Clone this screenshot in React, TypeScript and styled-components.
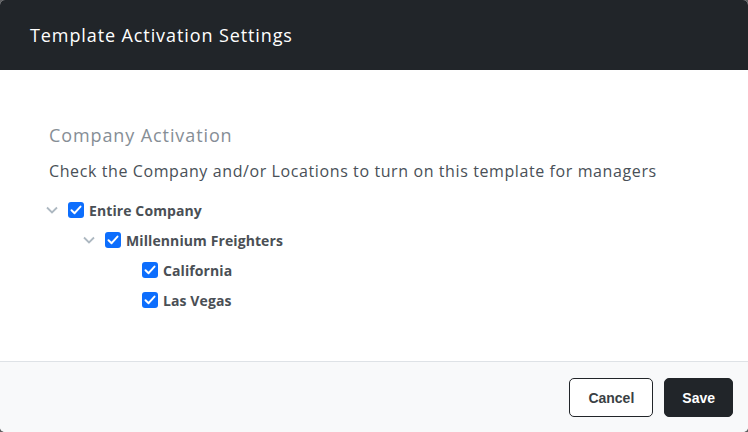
import styled, { createGlobalStyle } from "styled-components"

const GlobalStyle = createGlobalStyle`
  html, body {
    margin: 0;
    padding: 0;
    background: #5f6062;
  }
  * {
    box-sizing: border-box;
  }
`

const Modal = styled.div`
  width: 748px;
  height: 432px;
  display: flex;
  flex-direction: column;
  background: #fff;
  border-radius: 5px;
  overflow: hidden;
  font-family: "Open Sans", "Liberation Sans", sans-serif;
`

const Header = styled.div`
  height: 70px;
  display: flex;
  align-items: center;
  padding: 0 30px;
  background: #212529;
  color: #fff;
  font-size: 18px;
  font-weight: 500;
  letter-spacing: 0.9px;
`

const Body = styled.div`
  flex: 1;
  padding: 53px 49px 0;
`

const SectionTitle = styled.div`
  font-size: 18px;
  color: #868e96;
  line-height: 24px;
  letter-spacing: 0.9px;
`

const Description = styled.div`
  margin-top: 12px;
  font-size: 16px;
  color: #495057;
  line-height: 24px;
  letter-spacing: 0.6px;
`

const Tree = styled.div`
  margin: 12px 0 0 -3px;
  display: flex;
  flex-direction: column;
`

const Row = styled.div<{ $level: number }>`
  height: 30px;
  display: flex;
  align-items: center;
  padding-left: ${(p) => (p.$level - 1) * 37}px;
`

const Toggle = styled.span<{ $hidden?: boolean }>`
  width: 22px;
  height: 16px;
  display: flex;
  align-items: center;
  justify-content: flex-start;
  visibility: ${(p) => (p.$hidden ? "hidden" : "visible")};
`

const Box = styled.span`
  width: 16px;
  height: 16px;
  border-radius: 3px;
  background: #0d6efd;
  display: flex;
  align-items: center;
  justify-content: center;
`

const Label = styled.span`
  margin-left: 5px;
  font-size: 14px;
  font-weight: 700;
  color: #4a4f55;
  letter-spacing: 0.1px;
`

const Footer = styled.div`
  height: 71px;
  display: flex;
  align-items: center;
  justify-content: flex-end;
  gap: 11px;
  padding: 0 15px;
  background: #f8f9fa;
  border-top: 1px solid #dee2e6;
`

const Button = styled.button<{ $primary?: boolean }>`
  height: 39px;
  padding: 0 ${(p) => (p.$primary ? 17 : 18)}px;
  border-radius: 5px;
  border: 1px solid #212529;
  background: ${(p) => (p.$primary ? "#212529" : "#fff")};
  color: ${(p) => (p.$primary ? "#fff" : "#3a3f44")};
  font-family: "Liberation Sans", Arial, sans-serif;
  font-size: 14px;
  font-weight: 700;
  margin-top: 1px;
`

function Chevron() {
  return (
    <svg width="12" height="8" viewBox="0 0 12 8">
      <path d="M1 1.5 L6 6.5 L11 1.5" fill="none" stroke="#adb8c1" strokeWidth="1.8" />
    </svg>
  )
}

function Check() {
  return (
    <svg width="12" height="10" viewBox="0 0 12 10">
      <path d="M1.5 5.2 L4.6 8.2 L10.5 1.6" fill="none" stroke="#fff" strokeWidth="2" strokeLinecap="round" strokeLinejoin="round" />
    </svg>
  )
}

const nodes = [
  { label: "Entire Company", level: 1, expandable: true },
  { label: "Millennium Freighters", level: 2, expandable: true },
  { label: "California", level: 3, expandable: false },
  { label: "Las Vegas", level: 3, expandable: false },
]

export default function App() {
  return (
    <>
      <GlobalStyle />
      <Modal>
        <Header>Template Activation Settings</Header>
        <Body>
          <SectionTitle>Company Activation</SectionTitle>
          <Description>Check the Company and/or Locations to turn on this template for managers</Description>
          <Tree>
            {nodes.map((n) => (
              <Row key={n.label} $level={n.level}>
                <Toggle $hidden={!n.expandable}>
                  <Chevron />
                </Toggle>
                <Box>
                  <Check />
                </Box>
                <Label>{n.label}</Label>
              </Row>
            ))}
          </Tree>
        </Body>
        <Footer>
          <Button>Cancel</Button>
          <Button $primary>Save</Button>
        </Footer>
      </Modal>
    </>
  )
}
